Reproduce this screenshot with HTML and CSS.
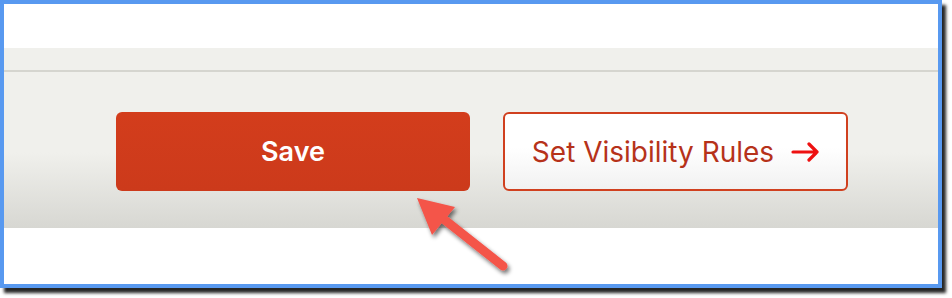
FILE: index.html
```html
<!DOCTYPE html>
<html>
<head>
<meta charset="utf-8">
<link rel="stylesheet" href="styles.css">
</head>
<body>
<div class="frame">
  <div class="top"></div>
  <div class="band">
    <div class="divider"></div>
    <div class="actions">
      <button class="btn btn-primary">Save</button>
      <button class="btn btn-outline">
        <span>Set Visibility Rules</span>
        <svg class="arrow-icon" width="28" height="20" viewBox="0 0 28 20" aria-hidden="true">
          <path d="M2 10 H26 M18 2 L26 10 L18 18" fill="none" stroke="#ee1111" stroke-width="3.2" stroke-linecap="round" stroke-linejoin="round"/>
        </svg>
      </button>
    </div>
  </div>
  <div class="bottom"></div>
  <svg class="callout" width="140" height="100" viewBox="0 0 140 100" aria-hidden="true">
    <defs>
      <filter id="sh" x="-20%" y="-20%" width="150%" height="150%">
        <feGaussianBlur in="SourceAlpha" stdDeviation="2"/>
        <feOffset dx="2" dy="3" result="b"/>
        <feComponentTransfer><feFuncA type="linear" slope="0.55"/></feComponentTransfer>
        <feMerge><feMergeNode/><feMergeNode in="SourceGraphic"/></feMerge>
      </filter>
    </defs>
    <g filter="url(#sh)">
      <line x1="97" y1="82" x2="30" y2="29" stroke="#f4544a" stroke-width="9" stroke-linecap="round"/>
      <polygon points="11,14 49,23 26,51" fill="#f4544a"/>
    </g>
  </svg>
</div>
</body>
</html>
```

FILE: styles.css
```css
html, body {
  margin: 0;
  padding: 0;
  background: #ffffff;
}

body {
  min-height: 298px;
}

.frame {
  position: relative;
  box-sizing: border-box;
  width: 942px;
  height: 288px;
  border: 4px solid #5899f0;
  background: #ffffff;
  box-shadow: 4px 5px 3px rgba(0, 0, 0, 0.85);
  display: flex;
  flex-direction: column;
}

.top {
  height: 44px;
  background: #ffffff;
}

.band {
  height: 180px;
  background: linear-gradient(#f0f0ec 0%, #f0f0ec 58%, #d7d7d2 100%);
  padding-top: 22px;
  box-sizing: border-box;
}

.divider {
  height: 2px;
  background: #d5d5cf;
}

.actions {
  display: flex;
  gap: 33px;
  padding-left: 112px;
  margin-top: 40px;
}

.btn {
  box-sizing: border-box;
  height: 79px;
  border-radius: 6px;
  font-family: Inter, "Noto Sans", sans-serif;
  font-size: 27px;
  cursor: pointer;
  display: flex;
  align-items: center;
  justify-content: center;
}

.btn-primary {
  width: 354px;
  border: none;
  background: linear-gradient(#d33d1c, #cc3a1b);
  color: #ffffff;
  font-weight: 600;
}

.btn-outline {
  width: 345px;
  border: 2px solid #d0401f;
  background: linear-gradient(#ffffff 45%, #f1f1f1 100%);
  color: #b6321a;
  font-weight: 400;
  font-size: 28px;
  gap: 17px;
}

.arrow-icon {
  display: block;
}

.bottom {
  flex: 1;
  background: #ffffff;
}

.callout {
  position: absolute;
  left: 402px;
  top: 180px;
}
```
